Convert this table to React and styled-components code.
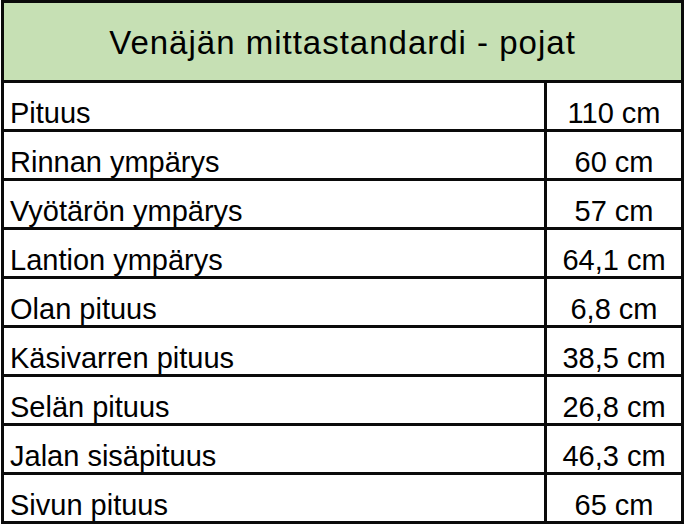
import React from "react";
import styled, { createGlobalStyle } from "styled-components";

const rows = [
  ["Pituus", "110 cm"],
  ["Rinnan ympärys", "60 cm"],
  ["Vyötärön ympärys", "57 cm"],
  ["Lantion ympärys", "64,1 cm"],
  ["Olan pituus", "6,8 cm"],
  ["Käsivarren pituus", "38,5 cm"],
  ["Selän pituus", "26,8 cm"],
  ["Jalan sisäpituus", "46,3 cm"],
  ["Sivun pituus", "65 cm"],
];

const GlobalStyle = createGlobalStyle`
  html, body {
    margin: 0;
    padding: 0;
    background: #ffffff;
  }
  body {
    font-family: "Liberation Sans", Arial, sans-serif;
    color: #000;
  }
`;

const Page = styled.div`
  padding-left: 1px;
`;

const SizeTable = styled.table`
  border-collapse: separate;
  border-spacing: 0;
  border-top: 3px solid #0a0a0a;
  border-left: 3px solid #0a0a0a;
  table-layout: fixed;
  width: 683px;
`;

const HeaderCell = styled.th`
  height: 80px;
  padding: 2px 0 0;
  box-sizing: border-box;
  background: #c6e0b4;
  border-right: 3px solid #0a0a0a;
  border-bottom: 3px solid #0a0a0a;
  font-weight: normal;
  font-size: 33px;
  letter-spacing: 1px;
  text-align: center;
  vertical-align: middle;
`;

const Cell = styled.td`
  height: 46px;
  padding: 0 0 0 ${(p) => (p.$value ? 0 : 6)}px;
  border-right: 3px solid #0a0a0a;
  border-bottom: 3px solid #0a0a0a;
  font-size: 29px;
  line-height: 32px;
  vertical-align: bottom;
  text-align: ${(p) => (p.$value ? "center" : "left")};
  white-space: nowrap;
`;

export default function App() {
  return (
    <Page>
      <GlobalStyle />
      <SizeTable>
        <colgroup>
          <col style={{ width: 543 }} />
          <col style={{ width: 137 }} />
        </colgroup>
        <thead>
          <tr>
            <HeaderCell colSpan={2}>Venäjän mittastandardi - pojat</HeaderCell>
          </tr>
        </thead>
        <tbody>
          {rows.map(([label, value]) => (
            <tr key={label}>
              <Cell>{label}</Cell>
              <Cell $value>{value}</Cell>
            </tr>
          ))}
        </tbody>
      </SizeTable>
    </Page>
  );
}
